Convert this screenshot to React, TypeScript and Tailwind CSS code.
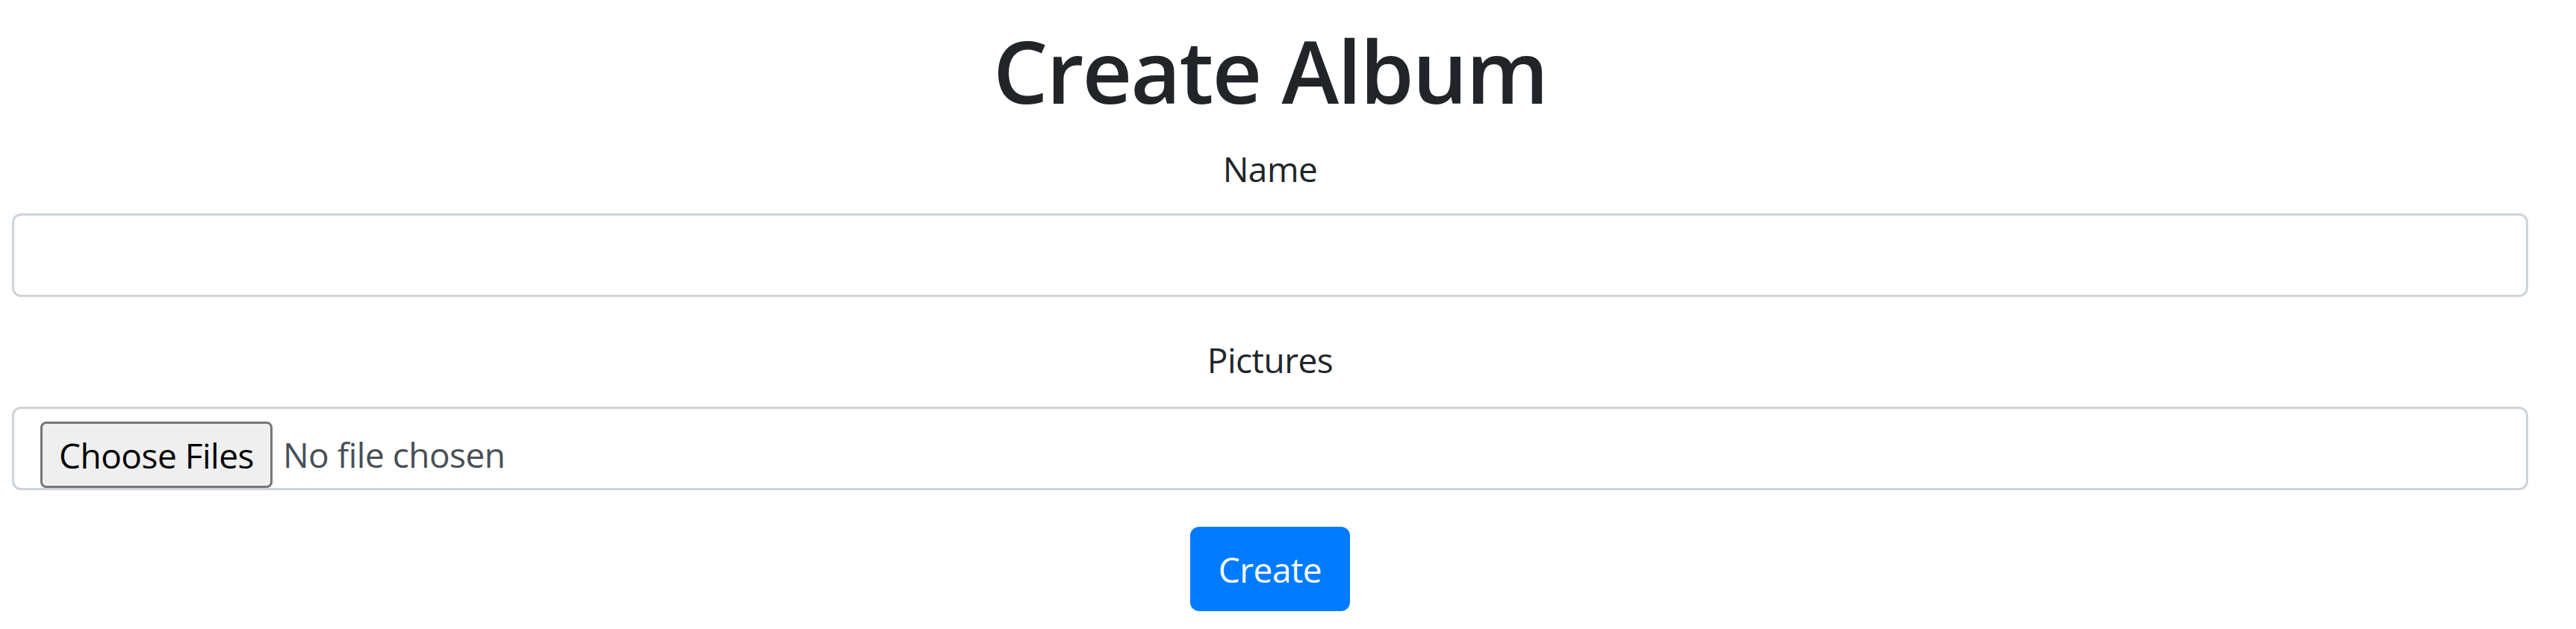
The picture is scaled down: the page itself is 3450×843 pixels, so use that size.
export default function App() {
  return (
    <div className="min-h-screen w-full bg-white font-['Open_Sans','Noto_Sans',sans-serif] text-[#212529]">
      <div className="pl-[16px] pr-[64px] pt-[22px]">
        <h1 className="text-center text-[116px] leading-[144px] font-semibold tracking-[-2px] mb-[24px]">
          Create Album
        </h1>
        <form onSubmit={(e) => e.preventDefault()}>
          <div className="mb-[48px]">
            <label
              htmlFor="name"
              className="block text-center text-[46px] leading-[72px] tracking-[-0.5px] mb-[24px]"
            >
              Name
            </label>
            <input
              id="name"
              type="text"
              className="block w-full h-[112px] px-[36px] border-[3px] border-[#ced4da] rounded-[12px] bg-white text-[46px] text-[#495057] outline-none"
            />
          </div>
          <div className="mb-[49px]">
            <label
              htmlFor="pictures"
              className="block text-center text-[46px] leading-[72px] tracking-[-0.5px] mb-[27px]"
            >
              Pictures
            </label>
            <label
              htmlFor="pictures"
              className="flex items-start h-[112px] pl-[35px] pt-[17px] border-[3px] border-[#ced4da] rounded-[12px] bg-white cursor-pointer"
            >
              <input id="pictures" type="file" multiple className="hidden" />
              <span className="flex items-center justify-center h-[89px] px-[22px] border-[3px] border-[#767676] rounded-[8px] bg-[#efefef] text-[46px] leading-[72px] tracking-[-0.5px] text-black">
                Choose Files
              </span>
              <span className="ml-[14px] text-[46px] leading-[89px] tracking-[-0.5px] text-[#495057]">
                No file chosen
              </span>
            </label>
          </div>
          <div className="flex justify-center">
            <button
              type="submit"
              className="h-[113px] px-[38px] rounded-[12px] bg-[#007bff] text-white text-[46px] leading-[72px] tracking-[-0.5px]"
            >
              Create
            </button>
          </div>
        </form>
      </div>
    </div>
  );
}
